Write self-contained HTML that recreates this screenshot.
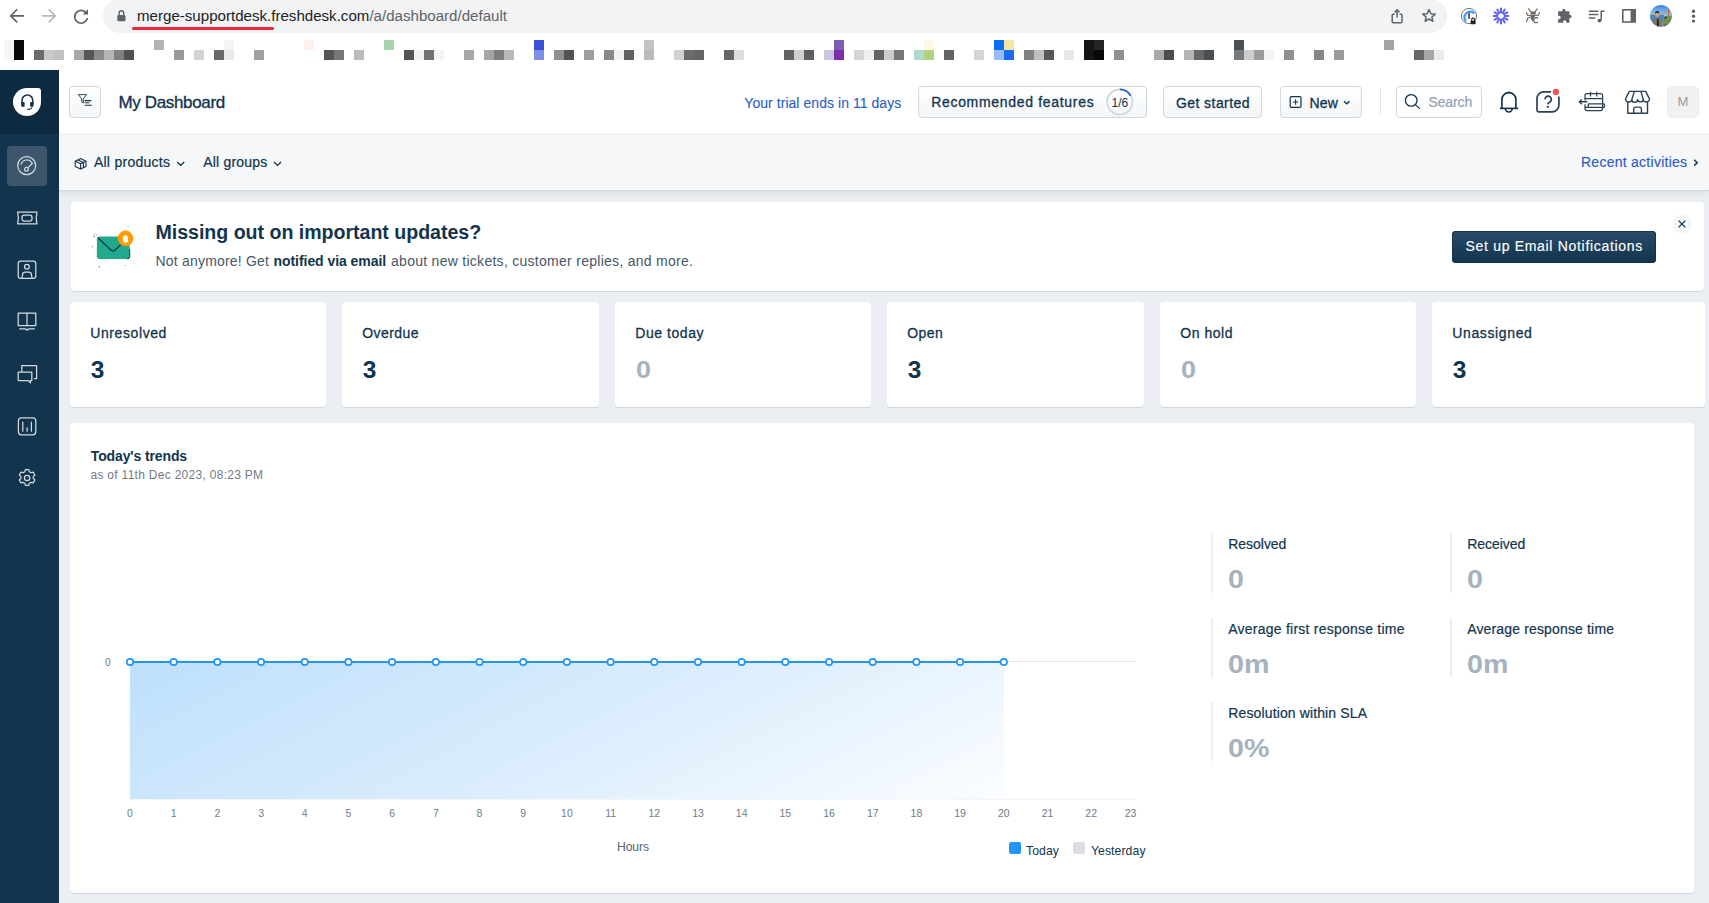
<!DOCTYPE html>
<html><head><meta charset="utf-8"><style>*{box-sizing:border-box;margin:0;padding:0}
html,body{width:1709px;height:903px;overflow:hidden;background:#ebeff3;font-family:"Liberation Sans",sans-serif;color:#12344d}
.abs{position:absolute}
.t{position:absolute;line-height:1;white-space:nowrap}
#chrome{position:absolute;left:0;top:0;width:1709px;height:70px;background:#fff}
#omni{position:absolute;left:103px;top:-1px;width:1344px;height:34px;border-radius:17px;background:#f1f3f4}
#url{position:absolute;left:137px;top:7px;font-size:15.1px;color:#202124;white-space:nowrap}
#url span{color:#5f6368}
#redline{position:absolute;left:131.5px;top:27px;width:142px;height:2.8px;border-radius:2px;background:#e8293b}
.px{position:absolute;width:10px;height:10px}
#side{position:absolute;left:0;top:70px;width:59px;height:833px;background:#12344d}
#sidetop{position:absolute;left:0;top:0;width:59px;height:64px;background:#0e2a40}
.btn{position:absolute;border:1px solid #cfd7df;border-radius:4px;background:linear-gradient(#fff,#f3f5f7)}
.card{position:absolute;background:#fff;border-radius:4px;box-shadow:0 1px 0 #cfd7df}
</style></head><body>
<div id="chrome">
  <div id="omni"></div>
  <svg class="abs" style="left:0;top:0" width="110" height="33" viewBox="0 0 110 33">
    <g fill="none" stroke="#5f6368" stroke-width="1.6" stroke-linecap="square">
      <path d="M23.2 15.9H11.2M16.6 10L10.7 15.9L16.6 21.8"/>
    </g>
    <g fill="none" stroke="#b4b7ba" stroke-width="1.6" stroke-linecap="square">
      <path d="M42.8 15.9H54.8M49.4 10L55.3 15.9L49.4 21.8"/>
    </g>
    <g fill="none" stroke="#5f6368" stroke-width="1.7">
      <path d="M86.4 13.2A6.4 6.4 0 1 0 87.4 18"/>
    </g>
    <path d="M88 9.2V14.6H82.6Z" fill="#5f6368"/>
  </svg>
  <svg class="abs" style="left:110px;top:5px" width="20" height="20" viewBox="110 5 20 20">
    <path d="M119.1 15.6V13.2a2.3 2.4 0 0 1 4.6 0V15.6" fill="none" stroke="#5f6368" stroke-width="1.4"/>
    <rect x="117.3" y="15" width="8.2" height="6.2" rx="1.2" fill="#5f6368"/>
  </svg>
  <div id="url">merge-supportdesk.freshdesk.com<span>/a/dashboard/default</span></div>
  <div id="redline"></div>
  <svg class="abs" style="left:1380px;top:0" width="329" height="33" viewBox="1380 0 329 33">
    <g fill="none" stroke="#5f6368" stroke-width="1.5">
      <path d="M1394.6 14.2h-1.4a1 1 0 0 0-1 1v6.6a1 1 0 0 0 1 1h7.8a1 1 0 0 0 1-1v-6.6a1 1 0 0 0-1-1h-1.4"/>
      <path d="M1397.1 17.6V10M1394.7 12.3l2.4-2.4l2.4 2.4"/>
      <path d="M1429 9.6l1.9 4.1l4.3 0.4l-3.3 2.9l1 4.3l-3.9-2.3l-3.9 2.3l1-4.3l-3.3-2.9l4.3-0.4z" stroke-linejoin="round"/>
    </g>
    <circle cx="1469" cy="16" r="7.6" fill="none" stroke="#777" stroke-width="1"/>
    <path d="M1466 21.2A5.3 5.3 0 1 1 1474.3 13.5" fill="none" stroke="#3b9cff" stroke-width="2.2"/>
    <rect x="1468.2" y="12.6" width="1.6" height="6.4" fill="#444"/>
    <path d="M1471.6 20.8v-1.2a1.5 1.5 0 0 1 3 0v1.2" fill="none" stroke="#222" stroke-width="1.1"/>
    <rect x="1470.6" y="20.4" width="5" height="3.8" rx="0.8" fill="#222"/>
    <path d="M1501.00 19.60L1501.00 23.40M1499.20 19.12L1497.30 22.41M1497.88 17.80L1494.59 19.70M1497.40 16.00L1493.60 16.00M1497.88 14.20L1494.59 12.30M1499.20 12.88L1497.30 9.59M1501.00 12.40L1501.00 8.60M1502.80 12.88L1504.70 9.59M1504.12 14.20L1507.41 12.30M1504.60 16.00L1508.40 16.00M1504.12 17.80L1507.41 19.70M1502.80 19.12L1504.70 22.41" stroke="#6060f4" stroke-width="2" stroke-linecap="round"/>
    <g fill="none" stroke="#6b625c" stroke-width="1.1" stroke-linecap="round" stroke-linejoin="round">
      <path d="M1528.6 8.8L1531.2 12.1M1537.2 8.9L1534.7 12.1"/>
      <path d="M1526.4 12.5L1527.6 15.3L1530.2 15.4M1539.5 12.5L1538.4 15.3L1535.8 15.4"/>
      <path d="M1529.8 17.4L1527.8 18L1526.5 21.8"/>
    </g>
    <path d="M1530.5 14.4V13a1.6 1.6 0 0 1 1.6-1.6h2.1a1.6 1.6 0 0 1 1.6 1.6V14.4z" fill="#6b625c"/>
    <path d="M1530.2 15h5.6L1534 17.5L1532.8 21.5L1531 19z" fill="#6b625c"/>
    <path d="M1537.9 18.6A2.4 2.6 0 1 0 1537.9 21.9" fill="none" stroke="#6b625c" stroke-width="1.3"/>
    <path d="M1562.4 11.2V10.3a1.5 1.5 0 0 1 3 0V11.2H1569.4V15.1H1570.2a1.4 1.4 0 0 1 0 2.8H1569.4V22.8H1566.3V21.9a1.6 1.6 0 0 0-3.2 0V22.8H1558.1V19.1H1559a1.7 1.7 0 0 0 0-3.4H1558.1V11.2z" fill="#5f6368"/>
    <g stroke="#5f6368" stroke-width="1.5" fill="none">
      <path d="M1588.8 11.2h9.6M1588.8 14.6h9.6M1588.8 18h6.5"/>
      <path d="M1601.2 20.3V11.2h3.3"/>
    </g>
    <circle cx="1599.4" cy="20.6" r="1.9" fill="#5f6368"/>
    <rect x="1622.8" y="9.8" width="12.4" height="12.2" fill="none" stroke="#5f6368" stroke-width="1.6"/>
    <rect x="1630.6" y="9.8" width="4.6" height="12.2" fill="#5f6368"/>
    <defs><linearGradient id="av" x1="0" y1="0" x2="0" y2="1"><stop offset="0" stop-color="#3f87d6"/><stop offset="0.45" stop-color="#8fcaf5"/><stop offset="1" stop-color="#8fcaf5"/></linearGradient>
    <clipPath id="avc"><circle cx="1661" cy="15.9" r="10.9"/></clipPath></defs>
    <g clip-path="url(#avc)">
      <rect x="1650" y="5" width="22" height="22" fill="url(#av)"/>
      <rect x="1650" y="13" width="22" height="2" fill="#a7aeb3"/>
      <rect x="1650" y="15" width="14" height="6" fill="#4d84bd"/>
      <path d="M1663 17.5Q1666 15 1672 15.5V27H1663z" fill="#6f9150"/>
      <path d="M1664 17.2q1.5-1.4 3-0.4l-0.5 1.6h-2.5z" fill="#3d4a3a"/>
      <rect x="1668" y="9.5" width="0.9" height="6" fill="#c8553a"/>
      <path d="M1663.5 13.2L1668.4 10.2L1672 12.6" fill="none" stroke="#c87060" stroke-width="0.4"/>
      <path d="M1664 24.5H1672V27H1664z" fill="#5a5f63"/>
      <path d="M1652.4 27V21.5q0.5-2.8 3.2-3.4h3.5q2.7 0.6 3.5 3.4V27z" fill="#7b7862"/>
      <rect x="1656.9" y="19" width="1.8" height="8" fill="#242424"/>
      <ellipse cx="1657.2" cy="14.8" rx="1.9" ry="2.3" fill="#c9a58c"/>
      <path d="M1655.1 14.2q-0.2-3.2 2.1-3.2q2.3 0 2.1 3.2q-0.6-1.6-2.1-1.6q-1.5 0-2.1 1.6z" fill="#1e1e1e"/>
    </g>
    <g fill="#5f6368"><circle cx="1693.5" cy="11.3" r="1.7"/><circle cx="1693.5" cy="16.2" r="1.7"/><circle cx="1693.5" cy="21.1" r="1.7"/></g>
  </svg>
<i class="px" style="left:4px;top:40px;background:#f6f6f6"></i>
<i class="px" style="left:4px;top:50px;background:#f6f6f6"></i>
<i class="px" style="left:14px;top:40px;background:#0a0a0a"></i>
<i class="px" style="left:14px;top:50px;background:#0a0a0a"></i>
<i class="px" style="left:34px;top:50px;background:#6b6b6b"></i>
<i class="px" style="left:44px;top:50px;background:#c8c8c8"></i>
<i class="px" style="left:54px;top:50px;background:#c0c0c0"></i>
<i class="px" style="left:74px;top:50px;background:#a8a8a8"></i>
<i class="px" style="left:84px;top:50px;background:#565656"></i>
<i class="px" style="left:94px;top:50px;background:#8a8a8a"></i>
<i class="px" style="left:104px;top:50px;background:#b5b5b5"></i>
<i class="px" style="left:114px;top:50px;background:#808080"></i>
<i class="px" style="left:124px;top:50px;background:#4f5254"></i>
<i class="px" style="left:154px;top:40px;background:#b3b3b3"></i>
<i class="px" style="left:174px;top:50px;background:#999999"></i>
<i class="px" style="left:194px;top:50px;background:#d3d3d3"></i>
<i class="px" style="left:214px;top:50px;background:#67686c"></i>
<i class="px" style="left:224px;top:40px;background:#f5f5f5"></i>
<i class="px" style="left:224px;top:50px;background:#e8e9e9"></i>
<i class="px" style="left:254px;top:50px;background:#a0a0a0"></i>
<i class="px" style="left:304px;top:40px;background:#fdf0ee"></i>
<i class="px" style="left:324px;top:50px;background:#555555"></i>
<i class="px" style="left:334px;top:50px;background:#777777"></i>
<i class="px" style="left:354px;top:50px;background:#bbbbbb"></i>
<i class="px" style="left:384px;top:40px;background:#a6d4ae"></i>
<i class="px" style="left:404px;top:50px;background:#505456"></i>
<i class="px" style="left:414px;top:50px;background:#f0f2f1"></i>
<i class="px" style="left:424px;top:50px;background:#707070"></i>
<i class="px" style="left:434px;top:50px;background:#f3f3f3"></i>
<i class="px" style="left:464px;top:50px;background:#a8a8a8"></i>
<i class="px" style="left:484px;top:50px;background:#a5a5a5"></i>
<i class="px" style="left:494px;top:50px;background:#7d7d7d"></i>
<i class="px" style="left:504px;top:50px;background:#b8b8b8"></i>
<i class="px" style="left:534px;top:40px;background:#3b4fd8"></i>
<i class="px" style="left:534px;top:50px;background:#7d90e6"></i>
<i class="px" style="left:554px;top:50px;background:#8f8f8f"></i>
<i class="px" style="left:564px;top:50px;background:#505254"></i>
<i class="px" style="left:584px;top:50px;background:#9d9d9d"></i>
<i class="px" style="left:604px;top:50px;background:#888888"></i>
<i class="px" style="left:614px;top:50px;background:#f1f3f1"></i>
<i class="px" style="left:624px;top:50px;background:#5f6162"></i>
<i class="px" style="left:644px;top:40px;background:#c3c3c3"></i>
<i class="px" style="left:644px;top:50px;background:#bababa"></i>
<i class="px" style="left:674px;top:50px;background:#d2d2d2"></i>
<i class="px" style="left:684px;top:50px;background:#6b6b6b"></i>
<i class="px" style="left:694px;top:50px;background:#666666"></i>
<i class="px" style="left:724px;top:50px;background:#646668"></i>
<i class="px" style="left:734px;top:50px;background:#dcdedd"></i>
<i class="px" style="left:784px;top:50px;background:#626364"></i>
<i class="px" style="left:794px;top:50px;background:#cfd0cf"></i>
<i class="px" style="left:804px;top:50px;background:#5d6062"></i>
<i class="px" style="left:824px;top:50px;background:#cfc3e3"></i>
<i class="px" style="left:834px;top:40px;background:#7a5fb5"></i>
<i class="px" style="left:834px;top:50px;background:#7b2fa8"></i>
<i class="px" style="left:854px;top:50px;background:#d5d5d5"></i>
<i class="px" style="left:864px;top:50px;background:#efefef"></i>
<i class="px" style="left:874px;top:50px;background:#5f6466"></i>
<i class="px" style="left:884px;top:50px;background:#cccccc"></i>
<i class="px" style="left:894px;top:50px;background:#777777"></i>
<i class="px" style="left:914px;top:50px;background:#b0d7d0"></i>
<i class="px" style="left:924px;top:40px;background:#fdf9e6"></i>
<i class="px" style="left:924px;top:50px;background:#acd47e"></i>
<i class="px" style="left:944px;top:50px;background:#626364"></i>
<i class="px" style="left:974px;top:50px;background:#d4d5d4"></i>
<i class="px" style="left:994px;top:40px;background:#0a6cf5"></i>
<i class="px" style="left:994px;top:50px;background:#97bdf9"></i>
<i class="px" style="left:1004px;top:40px;background:#f3e5a0"></i>
<i class="px" style="left:1004px;top:50px;background:#1a6af5"></i>
<i class="px" style="left:1024px;top:50px;background:#7e8081"></i>
<i class="px" style="left:1034px;top:50px;background:#bebfc0"></i>
<i class="px" style="left:1044px;top:50px;background:#55585a"></i>
<i class="px" style="left:1064px;top:50px;background:#e8e8e8"></i>
<i class="px" style="left:1084px;top:40px;background:#151515"></i>
<i class="px" style="left:1084px;top:50px;background:#141414"></i>
<i class="px" style="left:1094px;top:40px;background:#252525"></i>
<i class="px" style="left:1094px;top:50px;background:#080808"></i>
<i class="px" style="left:1114px;top:50px;background:#8f8f8f"></i>
<i class="px" style="left:1154px;top:50px;background:#aaaaaa"></i>
<i class="px" style="left:1164px;top:50px;background:#4a4d50"></i>
<i class="px" style="left:1184px;top:50px;background:#b5b6b4"></i>
<i class="px" style="left:1194px;top:50px;background:#636769"></i>
<i class="px" style="left:1204px;top:50px;background:#4a4e51"></i>
<i class="px" style="left:1234px;top:40px;background:#4c4f55"></i>
<i class="px" style="left:1234px;top:50px;background:#757a7e"></i>
<i class="px" style="left:1244px;top:50px;background:#cbcccb"></i>
<i class="px" style="left:1254px;top:50px;background:#9c9c9c"></i>
<i class="px" style="left:1264px;top:50px;background:#f3f3f3"></i>
<i class="px" style="left:1284px;top:50px;background:#8e8f8f"></i>
<i class="px" style="left:1314px;top:50px;background:#838787"></i>
<i class="px" style="left:1334px;top:50px;background:#9a9a9a"></i>
<i class="px" style="left:1384px;top:40px;background:#a3a3a3"></i>
<i class="px" style="left:1414px;top:50px;background:#65686b"></i>
<i class="px" style="left:1424px;top:50px;background:#a7a7a7"></i>
<i class="px" style="left:1434px;top:50px;background:#ececec"></i>

</div>
<div id="side"><div id="sidetop"></div>
  <svg class="abs" style="left:0;top:0" width="59" height="833" viewBox="0 70 59 833">
    <path d="M27 88h11a3 3 0 0 1 3 3V102A14 14 0 1 1 27 88z" fill="#fff"/>
    <path d="M22 104.5V100.6A5.4 5.6 0 0 1 32.8 100.6V104.5" fill="none" stroke="#12344d" stroke-width="1.5"/>
    <rect x="21.2" y="101.9" width="3.4" height="4.9" rx="0.8" fill="#12344d"/>
    <rect x="30.1" y="101.9" width="3.4" height="4.9" rx="0.8" fill="#12344d"/>
    <path d="M27.2 109.3Q31.2 109.6 32.1 107.4" fill="none" stroke="#12344d" stroke-width="1.1"/>
    <rect x="7" y="146" width="40" height="40" rx="4" fill="#3d566b"/>
    <g fill="none" stroke="#d3dae0" stroke-width="1.25" stroke-linecap="round" stroke-linejoin="round">
      <circle cx="26.7" cy="165.6" r="9"/>
      <path d="M21.2 164.2a5.9 5.9 0 0 1 10.6-1.6"/>
      <circle cx="26.5" cy="169.2" r="1.9"/>
      <path d="M27.8 167.9L32.4 163.3"/>
      <path d="M17.6 212.2h19.4q-1.6 5.8 0 11.6h-19.4q1.6-5.8 0-11.6z"/>
      <rect x="22" y="215" width="10" height="6" rx="2.2"/>
      <rect x="18.2" y="261.2" width="17.6" height="17.2" rx="2.4"/>
      <circle cx="26.9" cy="266.8" r="2.4"/>
      <path d="M22 278.2l0.5-3.4a2.8 2.8 0 0 1 2.8-2.6h3.4a2.8 2.8 0 0 1 2.8 2.6l0.5 3.4"/>
      <rect x="18.2" y="313" width="17.6" height="12.6"/>
      <path d="M27 313v12.6"/>
      <path d="M19.6 328.8h5.8l1.6 1.4l1.6-1.4h5.8"/>
      <path d="M21.8 371.4v-5.8h14.8v13h-2.2"/>
      <path d="M18.2 372h13.6v8.6h-1.6l0.2 2.2l-2.4-2.2h-9.8z"/>
      <rect x="18.4" y="417.8" width="17.4" height="17" rx="3"/>
      <path d="M22.8 431.2v-9M27.1 431.2v-3.4M31.4 431.2v-9"/>
      <circle cx="27.1" cy="478" r="2.7"/>
      <path d="M25.4 469.6h3.4l0.6 2.2l1.6 0.9l2.2-0.6l1.7 2.9l-1.6 1.6v1.8l1.6 1.6l-1.7 2.9l-2.2-0.6l-1.6 0.9l-0.6 2.2h-3.4l-0.6-2.2l-1.6-0.9l-2.2 0.6l-1.7-2.9l1.6-1.6v-1.8l-1.6-1.6l1.7-2.9l2.2 0.6l1.6-0.9z"/>
    </g>
  </svg>
</div>

<div class="abs" style="left:59px;top:70px;width:1650px;height:65px;background:#fff;border-bottom:1px solid #e8ecf0"></div>
<div class="abs" style="left:59px;top:135px;width:1650px;height:55px;background:#f5f7f9;box-shadow:0 1px 0 #d3dae1,0 3px 7px rgba(18,52,77,0.09)"></div>
<div class="btn" style="left:69px;top:86px;width:32px;height:32px"></div>
<svg class="abs" style="left:69px;top:86px" width="32" height="32" viewBox="69 86 32 32">
      <path d="M78.3 94.6h8.4l-3.4 4.2v4.2l-1.6-1.2v-3z" fill="none" stroke="#12344d" stroke-width="0.9" stroke-linejoin="round"/>
      <path d="M84.8 100.6h6.4M84.8 102.8h4.6M84.8 105.2h7" stroke="#12344d" stroke-width="1.1"/>
    </svg>
<div class="btn" style="left:918px;top:86px;width:229px;height:32px"></div>
<svg class="abs" style="left:1100px;top:86px" width="40" height="32" viewBox="1100 86 40 32">
      <circle cx="1119.8" cy="102" r="12.6" fill="none" stroke="#cfd7df" stroke-width="1.8"/>
      <path d="M1119.8 89.4A12.6 12.6 0 0 1 1130.7 95.7" fill="none" stroke="#2c5cc5" stroke-width="1.8"/>
    </svg>
<div class="btn" style="left:1163px;top:86px;width:99px;height:32px"></div>
<div class="btn" style="left:1280px;top:86px;width:82px;height:32px"></div>
<svg class="abs" style="left:1285px;top:90px" width="70" height="24" viewBox="1285 90 70 24">
      <rect x="1290.2" y="96.7" width="10.8" height="10.6" rx="1" fill="none" stroke="#12344d" stroke-width="1.2"/>
      <path d="M1295.6 99.3v5.4M1292.9 102h5.4" stroke="#12344d" stroke-width="1.1"/>
      <path d="M1344 101.2l2.8 2.6l2.8-2.6" fill="none" stroke="#12344d" stroke-width="1.3"/>
    </svg>
<div class="abs" style="left:1380px;top:88px;width:1px;height:27px;background:#dde3e8"></div>
<div class="abs" style="left:1396px;top:86px;width:86px;height:32px;border:1px solid #cfd7df;border-radius:4px;background:#fff"></div>
<svg class="abs" style="left:1400px;top:88px" width="300" height="30" viewBox="1400 88 300 30">
      <circle cx="1411.2" cy="100.4" r="5.8" fill="none" stroke="#12344d" stroke-width="1.3"/>
      <path d="M1415.4 104.6l4 3.8" stroke="#12344d" stroke-width="1.3" stroke-linecap="round"/>
      <g fill="none" stroke="#12344d" stroke-width="1.65" stroke-linejoin="round">
        <path d="M1501.9 108.4V99.6A7 7 0 0 1 1515.9 99.6V108.4"/>
        <path d="M1499.9 108.4H1518.1"/>
        <path d="M1505.4 108.6A3.4 3.4 0 0 0 1512.2 108.6"/>
      </g>
      <path d="M1507.6 93L1508.8 90.9L1510 93z" fill="#12344d"/>
      <g fill="none" stroke="#2a4255" stroke-width="1.7" stroke-linecap="butt" stroke-linejoin="round">
        <path d="M1551 91.9H1543.6A6.6 6.6 0 0 0 1537 98.5V110.2A1.6 1.6 0 0 0 1538.6 111.8H1552.3A6.6 6.6 0 0 0 1558.9 105.2V96.6"/>
        <path d="M1544.9 99.3A3.2 3.2 0 1 1 1550.6 101.4C1549.6 102.4 1548 102.7 1547.7 104.3"/>
      </g>
      <circle cx="1547.8" cy="106.9" r="1.15" fill="#2a4255"/>
      <circle cx="1555.9" cy="91.9" r="3.2" fill="#f2545b"/>
      <g fill="none" stroke="#2a4255" stroke-width="1.25" stroke-linejoin="round">
        <path d="M1585 100.6V95.6A2 2 0 0 1 1587 93.6H1600.6A2 2 0 0 1 1602.6 95.6V108.6A2 2 0 0 1 1600.6 110.6H1587A2 2 0 0 1 1585 108.6V104.2"/>
        <path d="M1590.5 91.8V96.4M1596.7 91.8V96.4M1585 98.6H1602.6"/>
        <path d="M1588.3 107.4V103.8H1604.2L1604.6 105.6L1604.2 107.4H1585"/>
        <path d="M1587.4 101.8H1579.4M1581.9 99.4L1579.3 101.8L1581.9 104.2" stroke-width="1.4"/>
      </g>
      <g fill="none" stroke="#2a4255" stroke-width="1.4" stroke-linejoin="round">
        <path d="M1629.3 91.4H1645.6L1649.5 98.8A3.1 2.8 0 0 1 1643.3 99.6A2.9 2.8 0 0 1 1637.6 99.6A2.9 2.8 0 0 1 1631.8 99.6A3.1 2.8 0 0 1 1625.6 98.8Z"/>
        <path d="M1634.4 91.4L1631.8 99.6M1640.9 91.4L1643.3 99.6"/>
        <path d="M1627.8 101.4V113.2H1647.5V101.4"/>
        <path d="M1633.7 113.2V109A1.9 1.9 0 0 1 1635.6 107.1H1639.5A1.9 1.9 0 0 1 1641.4 109V113.2"/>
      </g>
    </svg>
<div class="abs" style="left:1667px;top:86px;width:32px;height:32px;border:1px solid #ebebeb;border-radius:5px;background:#f1f1f1;color:#9a9a9a;font-size:13px;line-height:30px;text-align:center">M</div>
<svg class="abs" style="left:70px;top:150px" width="220" height="25" viewBox="70 150 220 25">
      <g fill="none" stroke="#12344d" stroke-width="1.1" stroke-linejoin="round">
        <path d="M75.2 161.2l5.4-2.6l5.4 2.6v5.2l-5.4 2.6l-5.4-2.6z"/>
        <path d="M75.2 161.2l5.4 2.6l5.4-2.6M80.6 163.8v5.2M78 159.9l5.4 2.6v5.4"/>
      </g>
      <path d="M177.2 162l3.5 3.4l3.5-3.4M274 162l3.5 3.4l3.5-3.4" fill="none" stroke="#12344d" stroke-width="1.3"/>
    </svg>
<svg class="abs" style="left:1688px;top:155px" width="15" height="15" viewBox="1688 155 15 15">
      <path d="M1694.2 159.8l3 2.9l-3 2.9" fill="none" stroke="#12344d" stroke-width="1.5"/>
    </svg>
<div class="card" style="left:71px;top:202px;width:1633px;height:89px"></div>
<svg class="abs" style="left:85px;top:215px" width="60" height="60" viewBox="85 215 60 60">
      <circle cx="104" cy="253" r="9" fill="#f3f4f4"/>
      <rect x="96.9" y="236.6" width="32.8" height="22.3" rx="2.6" fill="#20a98b"/>
      <path d="M98 237.8l13.2 12.4a2.6 2.6 0 0 0 3.6 0l7.2-6.8" fill="none" stroke="#0e3a55" stroke-width="1.3"/>
      <path d="M129.7 249v7.4a2.5 2.5 0 0 1-2.5 2.5" fill="none" stroke="#0e3a55" stroke-width="1"/>
      <circle cx="125.5" cy="238.4" r="7.8" fill="#fe9a06"/>
      <path d="M123 241.3v-3.6a2.5 2.5 0 0 1 5 0v3.6l0.9 0.6h-6.8z" fill="#fff"/>
      <circle cx="125.5" cy="242.6" r="0.9" fill="#fff"/>
      <path d="M94 235.5l1.2-1.8M97 234.2l-0.6 1.5M93 236.5h2" stroke="#516c7e" stroke-width="0.6"/>
      <circle cx="92.5" cy="246.5" r="0.7" fill="#7da3ec"/>
      <circle cx="99.5" cy="266.8" r="0.8" fill="#4f7be8"/>
      <circle cx="125.5" cy="265.6" r="0.6" fill="#5fbf9f"/>
      <circle cx="128" cy="226.4" r="0.6" fill="#7fcfb8"/>
    </svg>
<div class="abs" style="left:1452px;top:231px;width:204px;height:32px;border-radius:4px;background:linear-gradient(#284b69,#12344d);box-shadow:inset 0 0 0 1px #12344d"></div>
<div class="abs" style="left:1672px;top:214px;width:20px;height:20px;border-radius:50%;background:#f5f7f9"></div>
<svg class="abs" style="left:1672px;top:214px" width="20" height="20" viewBox="1672 214 20 20">
      <path d="M1678.6 220.6l6.8 6.8M1685.4 220.6l-6.8 6.8" stroke="#12344d" stroke-width="1.3"/>
    </svg>
<div class="card" style="left:70px;top:302px;width:256px;height:105px"></div>
<div class="card" style="left:342px;top:302px;width:257px;height:105px"></div>
<div class="card" style="left:615px;top:302px;width:256px;height:105px"></div>
<div class="card" style="left:887px;top:302px;width:257px;height:105px"></div>
<div class="card" style="left:1160px;top:302px;width:256px;height:105px"></div>
<div class="card" style="left:1432px;top:302px;width:273px;height:105px"></div>
<div class="card" style="left:70px;top:423px;width:1624px;height:470px"></div>
<svg class="abs" style="left:100px;top:640px" width="1060" height="170" viewBox="100 640 1060 170">
      <defs><linearGradient id="fillg" x1="130" y1="661" x2="367" y2="1125" gradientUnits="userSpaceOnUse">
        <stop offset="0" stop-color="#bee0fb"/><stop offset="0.5" stop-color="#d9ecfd"/><stop offset="1" stop-color="#fbfdff"/></linearGradient></defs>
      <rect x="130" y="661" width="1006" height="1" fill="#dfe4e8"/>
      <rect x="130" y="798.6" width="1006" height="1" fill="#ebeff3"/>
      <rect x="130" y="662" width="873.8" height="137" fill="url(#fillg)"/>
      <rect x="130" y="661" width="873.8" height="2" fill="#2396f3"/>
      <g fill="#fff" stroke="#2396f3" stroke-width="1.7"><circle cx="130.00" cy="662" r="3.2"/><circle cx="173.69" cy="662" r="3.2"/><circle cx="217.38" cy="662" r="3.2"/><circle cx="261.07" cy="662" r="3.2"/><circle cx="304.76" cy="662" r="3.2"/><circle cx="348.45" cy="662" r="3.2"/><circle cx="392.14" cy="662" r="3.2"/><circle cx="435.83" cy="662" r="3.2"/><circle cx="479.52" cy="662" r="3.2"/><circle cx="523.21" cy="662" r="3.2"/><circle cx="566.90" cy="662" r="3.2"/><circle cx="610.59" cy="662" r="3.2"/><circle cx="654.28" cy="662" r="3.2"/><circle cx="697.97" cy="662" r="3.2"/><circle cx="741.66" cy="662" r="3.2"/><circle cx="785.35" cy="662" r="3.2"/><circle cx="829.04" cy="662" r="3.2"/><circle cx="872.73" cy="662" r="3.2"/><circle cx="916.42" cy="662" r="3.2"/><circle cx="960.11" cy="662" r="3.2"/><circle cx="1003.80" cy="662" r="3.2"/></g>
    </svg>
<div class="abs" style="left:1009px;top:842px;width:12px;height:12px;border-radius:2px;background:#2196f8"></div>
<div class="abs" style="left:1073px;top:842px;width:12px;height:12px;border-radius:2px;background:#dadee2"></div>
<div class="abs" style="left:1211px;top:533px;width:2px;height:59.5px;background:#ebeff3"></div>
<div class="abs" style="left:1450px;top:533px;width:2px;height:59.5px;background:#ebeff3"></div>
<div class="abs" style="left:1211px;top:618px;width:2px;height:59px;background:#ebeff3"></div>
<div class="abs" style="left:1450px;top:618px;width:2px;height:59px;background:#ebeff3"></div>
<div class="abs" style="left:1211px;top:702px;width:2px;height:59px;background:#ebeff3"></div>
<div class="t" style="left:118.5px;top:93.81px;font-size:17px;font-weight:400;color:#12344d;letter-spacing:-0.351px;-webkit-text-stroke:0.35px #12344d;">My Dashboard</div>
<div class="t" style="left:744.3px;top:95.75px;font-size:14px;font-weight:400;color:#2c5cc5;letter-spacing:0.050px;-webkit-text-stroke:0.1px #2c5cc5;">Your trial ends in 11 days</div>
<div class="t" style="left:931.2px;top:95.15px;font-size:14px;font-weight:400;color:#12344d;letter-spacing:0.688px;-webkit-text-stroke:0.3px #12344d;">Recommended features</div>
<div class="t" style="left:1111.5px;top:96.94px;font-size:12px;font-weight:400;color:#12344d;letter-spacing:0.006px;">1/6</div>
<div class="t" style="left:1175.9px;top:95.85px;font-size:14px;font-weight:400;color:#12344d;letter-spacing:0.443px;-webkit-text-stroke:0.3px #12344d;">Get started</div>
<div class="t" style="left:1309.5px;top:95.85px;font-size:14px;font-weight:400;color:#12344d;letter-spacing:0.142px;-webkit-text-stroke:0.3px #12344d;">New</div>
<div class="t" style="left:1428.5px;top:94.95px;font-size:14px;font-weight:400;color:#8fa1b1;letter-spacing:-0.132px;-webkit-text-stroke:0.2px #8fa1b1;">Search</div>
<div class="t" style="left:93.9px;top:154.95px;font-size:14px;font-weight:400;color:#12344d;letter-spacing:0.268px;-webkit-text-stroke:0.2px #12344d;">All products</div>
<div class="t" style="left:203.2px;top:154.95px;font-size:14px;font-weight:400;color:#12344d;letter-spacing:0.193px;-webkit-text-stroke:0.2px #12344d;">All groups</div>
<div class="t" style="left:1581px;top:155.25px;font-size:14px;font-weight:400;color:#2c5cc5;letter-spacing:0.260px;-webkit-text-stroke:0.15px #2c5cc5;">Recent activities</div>
<div class="t" style="left:155.5px;top:223.41px;font-size:19.6px;font-weight:700;color:#12344d;letter-spacing:-0.027px;">Missing out on important updates?</div>
<div class="t" style="left:155.5px;top:254.05px;font-size:14px;font-weight:400;color:#475867;letter-spacing:0.200px;">Not anymore! Get</div>
<div class="t" style="left:273.5px;top:254.05px;font-size:14px;font-weight:700;color:#12344d;letter-spacing:-0.053px;">notified via email</div>
<div class="t" style="left:391.0px;top:254.05px;font-size:14px;font-weight:400;color:#475867;letter-spacing:0.278px;">about new tickets, customer replies, and more.</div>
<div class="t" style="left:1465.5px;top:239.25px;font-size:14px;font-weight:400;color:#ffffff;letter-spacing:0.691px;-webkit-text-stroke:0.15px #fff;">Set up Email Notifications</div>
<div class="t" style="left:90.3px;top:326.35px;font-size:14px;font-weight:400;color:#12344d;letter-spacing:0.586px;-webkit-text-stroke:0.3px #12344d;">Unresolved</div>
<div class="t" style="left:90.8px;top:358.26px;font-size:24.5px;font-weight:700;color:#12344d;letter-spacing:0.000px;">3</div>
<div class="t" style="left:362.3px;top:326.35px;font-size:14px;font-weight:400;color:#12344d;letter-spacing:0.433px;-webkit-text-stroke:0.3px #12344d;">Overdue</div>
<div class="t" style="left:362.8px;top:358.26px;font-size:24.5px;font-weight:700;color:#12344d;letter-spacing:0.000px;">3</div>
<div class="t" style="left:635.3px;top:326.35px;font-size:14px;font-weight:400;color:#12344d;letter-spacing:0.546px;-webkit-text-stroke:0.3px #12344d;">Due today</div>
<div class="t" style="left:635.8px;top:358.26px;font-size:24.5px;font-weight:700;color:#a6b2bd;letter-spacing:0.000px;transform:scaleX(1.1);transform-origin:0 0;">0</div>
<div class="t" style="left:907.3px;top:326.35px;font-size:14px;font-weight:400;color:#12344d;letter-spacing:0.383px;-webkit-text-stroke:0.3px #12344d;">Open</div>
<div class="t" style="left:907.8px;top:358.26px;font-size:24.5px;font-weight:700;color:#12344d;letter-spacing:0.000px;">3</div>
<div class="t" style="left:1180.3px;top:326.35px;font-size:14px;font-weight:400;color:#12344d;letter-spacing:0.526px;-webkit-text-stroke:0.3px #12344d;">On hold</div>
<div class="t" style="left:1180.8px;top:358.26px;font-size:24.5px;font-weight:700;color:#a6b2bd;letter-spacing:0.000px;transform:scaleX(1.1);transform-origin:0 0;">0</div>
<div class="t" style="left:1452.3px;top:326.35px;font-size:14px;font-weight:400;color:#12344d;letter-spacing:0.629px;-webkit-text-stroke:0.3px #12344d;">Unassigned</div>
<div class="t" style="left:1452.8px;top:358.26px;font-size:24.5px;font-weight:700;color:#12344d;letter-spacing:0.000px;">3</div>
<div class="t" style="left:90.8px;top:449.15px;font-size:14px;font-weight:700;color:#12344d;letter-spacing:-0.130px;">Today's trends</div>
<div class="t" style="left:90.5px;top:469.34px;font-size:12px;font-weight:400;color:#6f7c87;letter-spacing:0.287px;">as of 11th Dec 2023, 08:23 PM</div>
<div class="t" style="left:1228.3px;top:536.75px;font-size:14px;font-weight:400;color:#12344d;letter-spacing:-0.039px;-webkit-text-stroke:0.2px #12344d;">Resolved</div>
<div class="t" style="left:1227.8px;top:565.97px;font-size:26.5px;font-weight:700;color:#a6b2bd;letter-spacing:0.000px;transform:scaleX(1.08);transform-origin:0 0;">0</div>
<div class="t" style="left:1467.2px;top:536.75px;font-size:14px;font-weight:400;color:#12344d;letter-spacing:-0.039px;-webkit-text-stroke:0.2px #12344d;">Received</div>
<div class="t" style="left:1466.7px;top:565.97px;font-size:26.5px;font-weight:700;color:#a6b2bd;letter-spacing:0.000px;transform:scaleX(1.08);transform-origin:0 0;">0</div>
<div class="t" style="left:1228.3px;top:622.15px;font-size:14px;font-weight:400;color:#12344d;letter-spacing:0.232px;-webkit-text-stroke:0.2px #12344d;">Average first response time</div>
<div class="t" style="left:1227.8px;top:650.97px;font-size:26.5px;font-weight:700;color:#a6b2bd;letter-spacing:0.000px;transform:scaleX(1.08);transform-origin:0 0;">0m</div>
<div class="t" style="left:1467.2px;top:622.15px;font-size:14px;font-weight:400;color:#12344d;letter-spacing:0.154px;-webkit-text-stroke:0.2px #12344d;">Average response time</div>
<div class="t" style="left:1466.7px;top:650.97px;font-size:26.5px;font-weight:700;color:#a6b2bd;letter-spacing:0.000px;transform:scaleX(1.08);transform-origin:0 0;">0m</div>
<div class="t" style="left:1228.3px;top:706.15px;font-size:14px;font-weight:400;color:#12344d;letter-spacing:0.126px;-webkit-text-stroke:0.2px #12344d;">Resolution within SLA</div>
<div class="t" style="left:1227.8px;top:734.97px;font-size:26.5px;font-weight:700;color:#a6b2bd;letter-spacing:0.000px;transform:scaleX(1.08);transform-origin:0 0;">0%</div>
<div class="t" style="left:105.1px;top:658.13px;font-size:10px;font-weight:400;color:#6f7c87;letter-spacing:0.000px;">0</div>
<div class="t" style="left:130.0px;top:808.11px;font-size:10.5px;font-weight:400;color:#6f7c87;letter-spacing:0.000px;transform:translateX(-50%);">0</div>
<div class="t" style="left:173.69px;top:808.11px;font-size:10.5px;font-weight:400;color:#6f7c87;letter-spacing:0.000px;transform:translateX(-50%);">1</div>
<div class="t" style="left:217.38px;top:808.11px;font-size:10.5px;font-weight:400;color:#6f7c87;letter-spacing:0.000px;transform:translateX(-50%);">2</div>
<div class="t" style="left:261.07px;top:808.11px;font-size:10.5px;font-weight:400;color:#6f7c87;letter-spacing:0.000px;transform:translateX(-50%);">3</div>
<div class="t" style="left:304.76px;top:808.11px;font-size:10.5px;font-weight:400;color:#6f7c87;letter-spacing:0.000px;transform:translateX(-50%);">4</div>
<div class="t" style="left:348.45px;top:808.11px;font-size:10.5px;font-weight:400;color:#6f7c87;letter-spacing:0.000px;transform:translateX(-50%);">5</div>
<div class="t" style="left:392.14px;top:808.11px;font-size:10.5px;font-weight:400;color:#6f7c87;letter-spacing:0.000px;transform:translateX(-50%);">6</div>
<div class="t" style="left:435.83px;top:808.11px;font-size:10.5px;font-weight:400;color:#6f7c87;letter-spacing:0.000px;transform:translateX(-50%);">7</div>
<div class="t" style="left:479.52px;top:808.11px;font-size:10.5px;font-weight:400;color:#6f7c87;letter-spacing:0.000px;transform:translateX(-50%);">8</div>
<div class="t" style="left:523.21px;top:808.11px;font-size:10.5px;font-weight:400;color:#6f7c87;letter-spacing:0.000px;transform:translateX(-50%);">9</div>
<div class="t" style="left:566.9px;top:808.11px;font-size:10.5px;font-weight:400;color:#6f7c87;letter-spacing:0.000px;transform:translateX(-50%);">10</div>
<div class="t" style="left:610.5899999999999px;top:808.11px;font-size:10.5px;font-weight:400;color:#6f7c87;letter-spacing:0.000px;transform:translateX(-50%);">11</div>
<div class="t" style="left:654.28px;top:808.11px;font-size:10.5px;font-weight:400;color:#6f7c87;letter-spacing:0.000px;transform:translateX(-50%);">12</div>
<div class="t" style="left:697.97px;top:808.11px;font-size:10.5px;font-weight:400;color:#6f7c87;letter-spacing:0.000px;transform:translateX(-50%);">13</div>
<div class="t" style="left:741.66px;top:808.11px;font-size:10.5px;font-weight:400;color:#6f7c87;letter-spacing:0.000px;transform:translateX(-50%);">14</div>
<div class="t" style="left:785.3499999999999px;top:808.11px;font-size:10.5px;font-weight:400;color:#6f7c87;letter-spacing:0.000px;transform:translateX(-50%);">15</div>
<div class="t" style="left:829.04px;top:808.11px;font-size:10.5px;font-weight:400;color:#6f7c87;letter-spacing:0.000px;transform:translateX(-50%);">16</div>
<div class="t" style="left:872.73px;top:808.11px;font-size:10.5px;font-weight:400;color:#6f7c87;letter-spacing:0.000px;transform:translateX(-50%);">17</div>
<div class="t" style="left:916.42px;top:808.11px;font-size:10.5px;font-weight:400;color:#6f7c87;letter-spacing:0.000px;transform:translateX(-50%);">18</div>
<div class="t" style="left:960.1099999999999px;top:808.11px;font-size:10.5px;font-weight:400;color:#6f7c87;letter-spacing:0.000px;transform:translateX(-50%);">19</div>
<div class="t" style="left:1003.8px;top:808.11px;font-size:10.5px;font-weight:400;color:#6f7c87;letter-spacing:0.000px;transform:translateX(-50%);">20</div>
<div class="t" style="left:1047.49px;top:808.11px;font-size:10.5px;font-weight:400;color:#6f7c87;letter-spacing:0.000px;transform:translateX(-50%);">21</div>
<div class="t" style="left:1091.1799999999998px;top:808.11px;font-size:10.5px;font-weight:400;color:#6f7c87;letter-spacing:0.000px;transform:translateX(-50%);">22</div>
<div class="t" style="left:1130.5px;top:808.11px;font-size:10.5px;font-weight:400;color:#6f7c87;letter-spacing:0.000px;transform:translateX(-50%);">23</div>
<div class="t" style="left:616.9px;top:840.67px;font-size:12.2px;font-weight:400;color:#5a6570;letter-spacing:-0.054px;">Hours</div>
<div class="t" style="left:1026.1px;top:845.17px;font-size:12.2px;font-weight:400;color:#12344d;letter-spacing:0.067px;">Today</div>
<div class="t" style="left:1090.9px;top:845.17px;font-size:12.2px;font-weight:400;color:#12344d;letter-spacing:0.104px;">Yesterday</div>
</body></html>
